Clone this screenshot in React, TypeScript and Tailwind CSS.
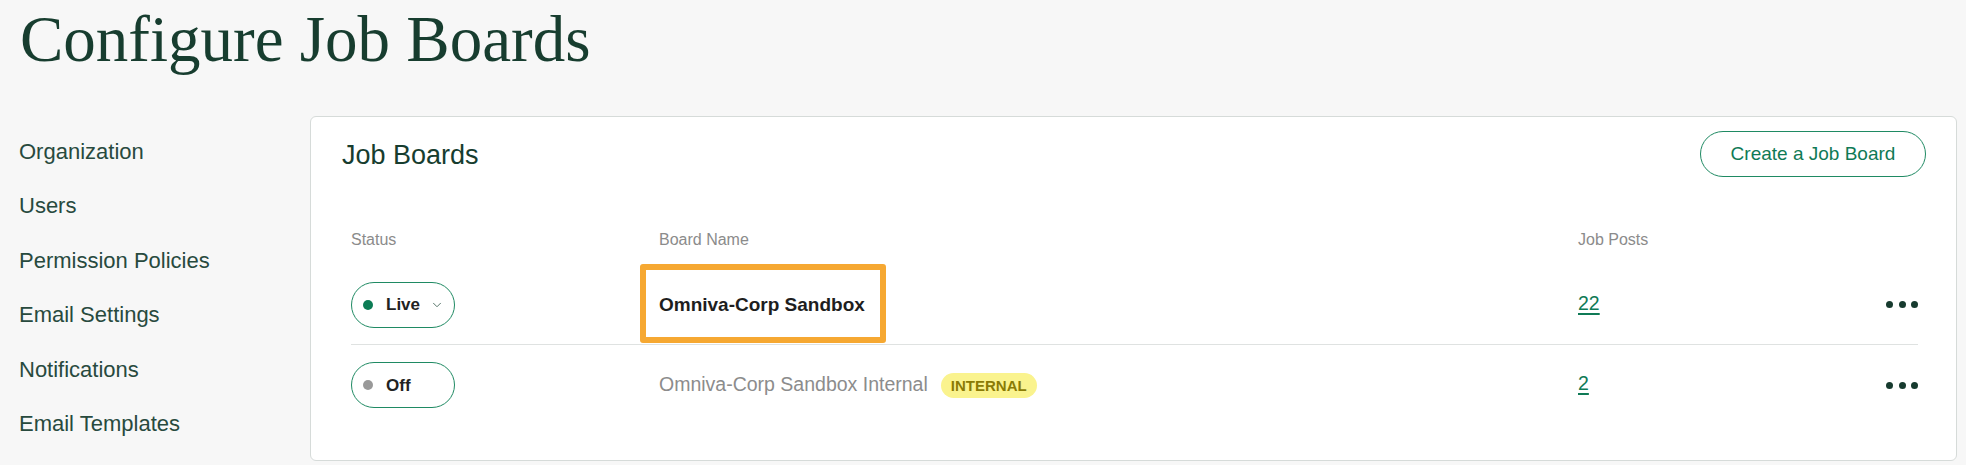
import { ChevronDown } from "lucide-react";

const navItems = [
  "Organization",
  "Users",
  "Permission Policies",
  "Email Settings",
  "Notifications",
  "Email Templates",
];

type Board = {
  name: string;
  live: boolean;
  posts: number;
  internal?: boolean;
  highlight?: boolean;
};

const boards: Board[] = [
  { name: "Omniva-Corp Sandbox", live: true, posts: 22, highlight: true },
  { name: "Omniva-Corp Sandbox Internal", live: false, posts: 2, internal: true },
];

const App = () => {
  return (
    <div className="min-h-screen w-full bg-[#f7f7f7] font-['Liberation_Sans',Arial,sans-serif]">
      {/* Page title */}
      <h1 className="pl-[20px] pt-[7px] text-[65px] leading-[65px] text-[#173d2f] font-['Liberation_Serif',serif]">
        Configure Job Boards
      </h1>

      <div className="mt-[44px] flex">
        {/* Sidebar */}
        <nav className="w-[310px] shrink-0 pl-[19px] pt-[9px]">
          {navItems.map((item) => (
            <div
              key={item}
              className="text-[22px] leading-[54.4px] text-[#284a3e]"
            >
              {item}
            </div>
          ))}
        </nav>

        {/* Card */}
        <section className="mr-[9px] flex-1 rounded-[6px] border border-[#d6dbd9] bg-white">
          {/* Header */}
          <div className="flex items-center justify-between pl-[31px] pr-[30px] pt-[14px]">
            <h2 className="mt-[3px] text-[27px] leading-none text-[#173d2f]">
              Job Boards
            </h2>
            <button className="h-[46px] w-[226px] rounded-full border border-[#1f8a63] text-[19px] font-medium text-[#0f7a56]">
              Create a Job Board
            </button>
          </div>

          {/* Table */}
          <div className="pl-[40px] pr-[38px] pb-[35px]">
            <div className="grid grid-cols-[308px_919px_1fr_auto] pt-[55px] pb-[17px] text-[16px] leading-[16px] text-[#8b8b8b]">
              <div>Status</div>
              <div>Board Name</div>
              <div>Job Posts</div>
              <div className="w-[32px]" />
            </div>

            {boards.map((b, i) => (
              <div
                key={b.name}
                className={`grid h-[80px] grid-cols-[308px_919px_1fr_auto] items-center ${
                  i === 0 ? "border-b border-[#dfe2e1]" : ""
                }`}
              >
                {/* Status pill */}
                <div>
                  <div className="flex h-[46px] w-[104px] items-center rounded-full border border-[#1f8a63] pl-[11px]">
                    <span
                      className={`h-[10px] w-[10px] rounded-full ${
                        b.live ? "bg-[#0c7c55]" : "bg-[#999999]"
                      }`}
                    />
                    <span className="ml-[13px] text-[17px] font-bold leading-none text-[#222222]">
                      {b.live ? "Live" : "Off"}
                    </span>
                    {b.live && (
                      <ChevronDown
                        size={14}
                        strokeWidth={1.6}
                        className="ml-[10px] text-[#4d6e62]"
                      />
                    )}
                  </div>
                </div>

                {/* Board name */}
                <div className="flex items-center">
                  {b.highlight ? (
                    <span className="relative text-[19px] font-bold leading-none text-[#1e1e1e]">
                      {b.name}
                      <span className="pointer-events-none absolute -top-[31px] -bottom-[29px] -left-[19px] -right-[21px] rounded-[3px] border-[6px] border-[#f6a832]" />
                    </span>
                  ) : (
                    <span className="text-[19.5px] leading-none text-[#8c8c8c]">
                      {b.name}
                    </span>
                  )}
                  {b.internal && (
                    <span className="ml-[13px] flex h-[25px] items-center rounded-full bg-[#faf38e] px-[10px] text-[15px] font-bold leading-none text-[#8a7b05]">
                      INTERNAL
                    </span>
                  )}
                </div>

                {/* Job posts */}
                <div>
                  <a className="text-[19.5px] leading-none text-[#0f7a56] underline decoration-[1.5px] underline-offset-[3px]">
                    {b.posts}
                  </a>
                </div>

                {/* More */}
                <div className="flex w-[32px] items-center justify-between">
                  <span className="h-[7px] w-[7px] rounded-full bg-[#173b2f]" />
                  <span className="h-[7px] w-[7px] rounded-full bg-[#173b2f]" />
                  <span className="h-[7px] w-[7px] rounded-full bg-[#173b2f]" />
                </div>
              </div>
            ))}
          </div>
        </section>
      </div>
    </div>
  );
};

export default App;
